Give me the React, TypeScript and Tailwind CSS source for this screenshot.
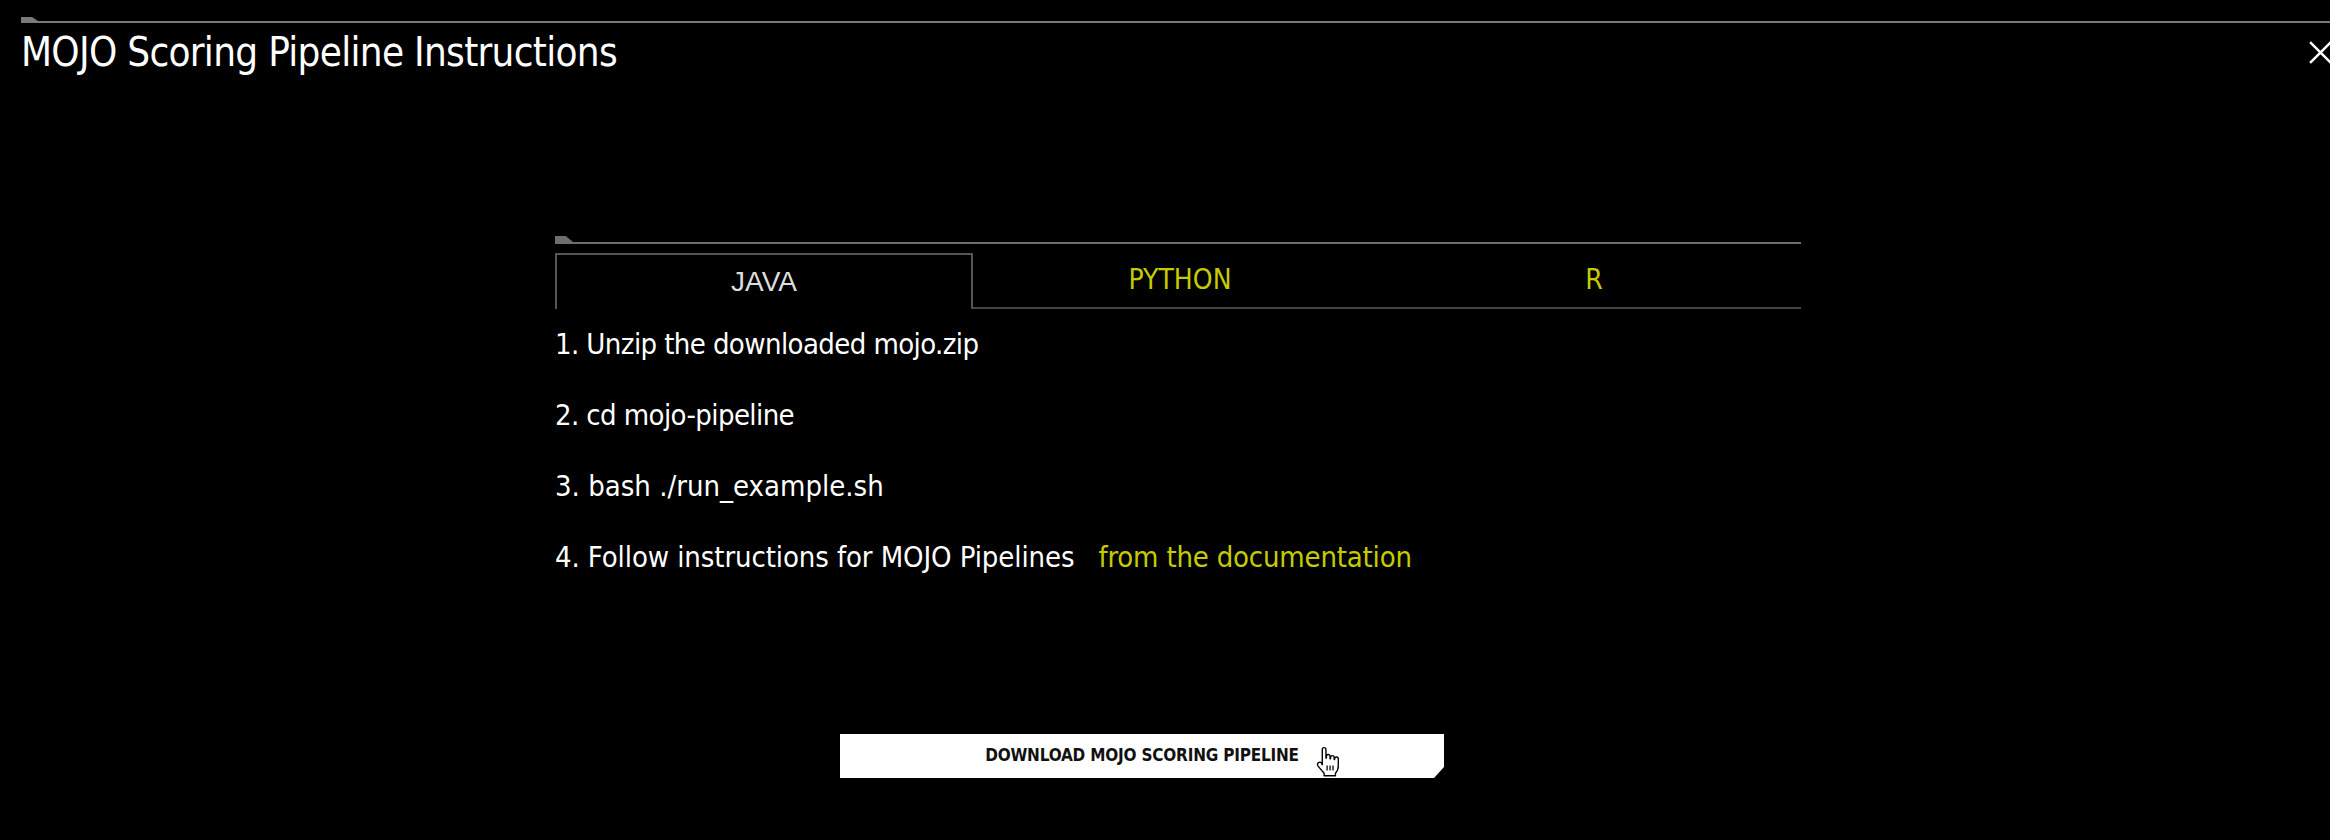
import React from "react";

const narrow = "font-['Liberation_Sans_Narrow','DejaVu_Sans_Condensed',sans-serif]";

function HandCursor() {
  return (
    <svg width="28" height="32" viewBox="0 0 24 28" className="absolute left-[1314px] top-[746px]">
      <path
        d="M7 3a1.6 1.6 0 0 1 3.2 0v7.5h.4V9a1.6 1.6 0 0 1 3.2 0v2.2h.4V10a1.6 1.6 0 0 1 3.2 0v1.8h.4v-.6a1.6 1.6 0 0 1 3.2 0v6.3c0 3-1.4 5.2-2.5 6.3V26H8.6v-2.2L3.3 17.6c-.8-1-.6-2.5.4-3.1 1-.6 2.1-.3 2.7.5L7 16.4z"
        fill="white"
        stroke="black"
        strokeWidth="1.2"
        strokeLinejoin="round"
      />
      <path d="M11.2 17v4.5M13.8 17v4.5M16.4 17v4.5" stroke="black" strokeWidth="1.1" />
    </svg>
  );
}

export default function App() {
  return (
    <div className="relative h-[840px] w-[2330px] overflow-hidden bg-black text-white">
      {/* header rule */}
      <div className="ml-[21px] pt-[17px]">
        <div className="h-[4px] w-[17px] bg-[#7a7a7a] [clip-path:polygon(0_0,65%_0,100%_100%,0_100%)]" />
        <div className="h-[2px] bg-[#7a7a7a]" />
      </div>

      <div className="flex items-center justify-between pl-[21px]">
        <h1 className={`${narrow} mt-[7px] text-[40px] leading-[44px] font-normal tracking-[-0.7px]`}>
          MOJO Scoring Pipeline Instructions
        </h1>
        <svg width="25" height="25" viewBox="0 0 24 24" className="mr-[-3px] mt-[8px]">
          <path d="M2 2L22 22M22 2L2 22" stroke="white" strokeWidth="2.4" />
        </svg>
      </div>

      {/* tabs */}
      <div className="ml-[555px] mt-[162px] w-[1246px]">
        <div className="h-[6px] w-[18px] bg-[#6e6e6e] [clip-path:polygon(0_0,60%_0,100%_100%,0_100%)]" />
        <div className="h-[2px] bg-[#6e6e6e]" />
        <div className="mt-[9px] flex h-[56px]">
          <div className="flex flex-1 items-center justify-center border-x-2 border-t-2 border-[#555] font-['Liberation_Sans',sans-serif] text-[28px] text-[#dddddd]">
            JAVA
          </div>
          <div className={`${narrow} flex flex-1 items-center justify-center border-b-2 border-[#444] text-[28px] text-[#c4cc00]`}>
            PYTHON
          </div>
          <div className={`${narrow} flex flex-1 items-center justify-center border-b-2 border-[#444] text-[28px] text-[#c4cc00]`}>
            R
          </div>
        </div>

        <ul className={`${narrow} text-[29px] leading-[71px]`}>
          <li className="tracking-[-0.6px]">1. Unzip the downloaded mojo.zip</li>
          <li className="tracking-[-0.6px]">2. cd mojo-pipeline</li>
          <li className="tracking-[0px]">3. bash ./run_example.sh</li>
          <li className="tracking-[-0.1px]">
            4. Follow instructions for MOJO Pipelines
            <span className="ml-[24px] tracking-[-0.2px] text-[#c4cc00]">from the documentation</span>
          </li>
        </ul>
      </div>

      {/* download button */}
      <div className="ml-[840px] mt-[141px] flex h-[44px] w-[604px] items-center justify-center bg-white [clip-path:polygon(0_0,100%_0,100%_75%,calc(100%-10px)_100%,0_100%)]">
        <span className={`${narrow} text-[17px] font-bold tracking-[-0.2px] text-[#111]`}>
          DOWNLOAD MOJO SCORING PIPELINE
        </span>
      </div>

      <HandCursor />
    </div>
  );
}
